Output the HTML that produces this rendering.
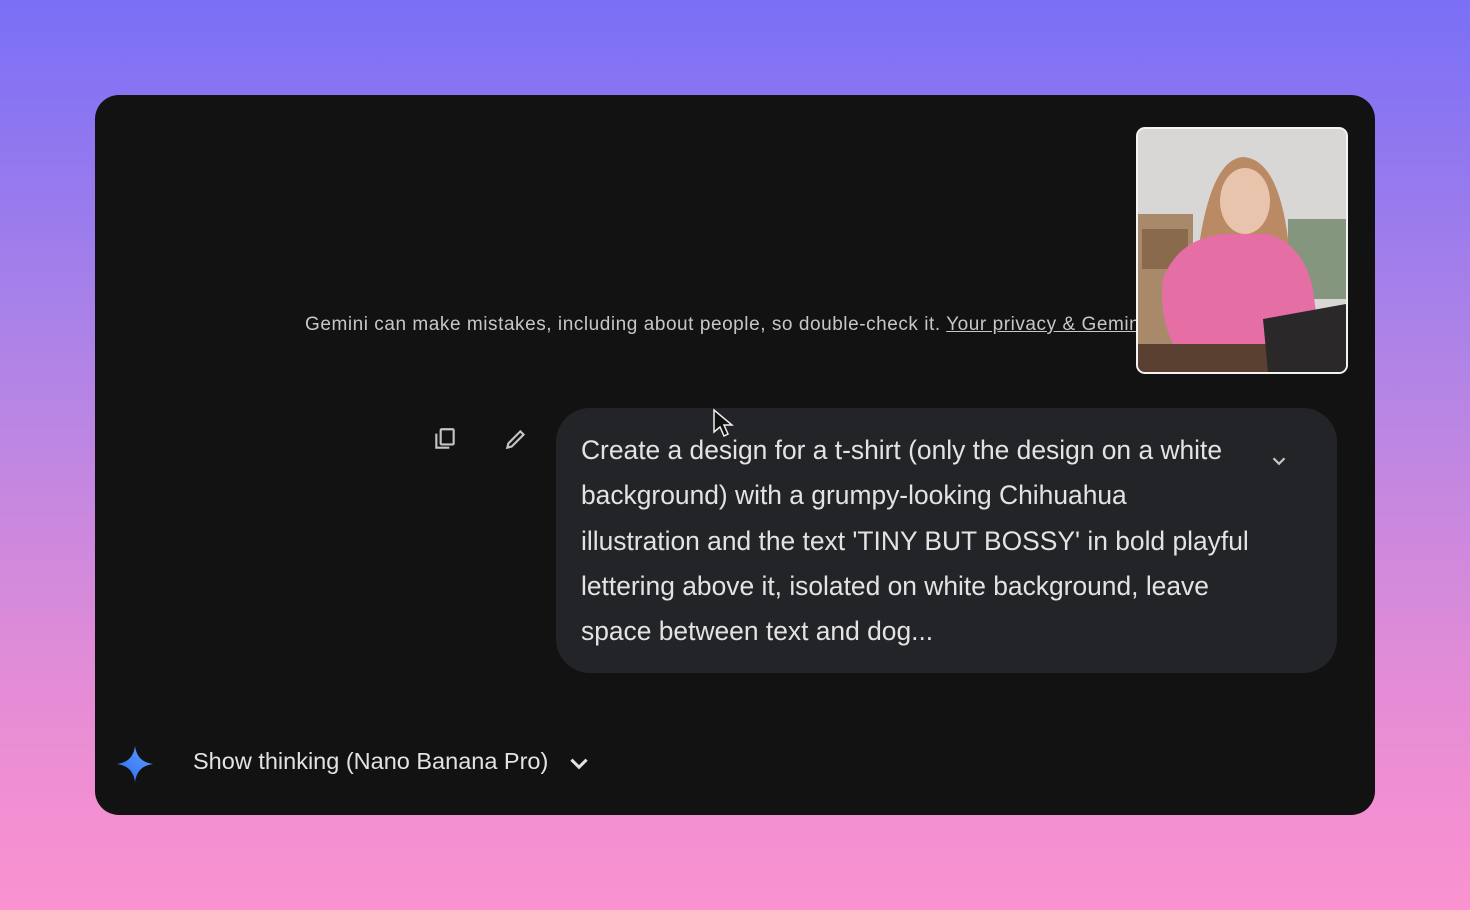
<!DOCTYPE html>
<html><head><style>
html,body{margin:0;padding:0;}
body{width:1470px;height:910px;overflow:hidden;background:linear-gradient(180deg,#7a6ff6 0%,#b184e6 40%,#e48cd6 75%,#fb92cf 100%);font-family:"Liberation Sans",sans-serif;position:relative;}
.card{position:absolute;left:95px;top:95px;width:1280px;height:720px;background:#121213;border-radius:24px;overflow:hidden;}
.disc{position:absolute;left:210px;top:219px;font-size:19px;letter-spacing:0.55px;color:#c7c7c7;white-space:nowrap;}
.disc u{color:#c7c7c7;}
.bubble{position:absolute;left:461px;top:313px;width:781px;height:265px;background:#232427;border-radius:34px;}
.btext{position:absolute;left:25px;top:20px;font-size:26.4px;line-height:45.3px;color:#e3e3e3;white-space:nowrap;}
.show{position:absolute;left:98px;top:653px;font-size:23.5px;color:#e3e3e3;white-space:nowrap;}
.photo{position:absolute;left:1041px;top:32px;width:208px;height:243px;border:2px solid #f3f3f3;border-radius:9px;overflow:hidden;background:#d9d8d6;}
</style></head><body>
<div class="card">
<div class="disc">Gemini can make mistakes, including about people, so double-check it. <u>Your privacy &amp; Gemini Apps</u></div>
<div class="photo">
<svg width="208" height="243" viewBox="0 0 208 243">
<rect width="208" height="243" fill="#d8d7d5"/>
<rect x="0" y="85" width="55" height="160" fill="#a88a6a"/>
<rect x="4" y="100" width="46" height="40" fill="#8a6a4c"/>
<rect x="150" y="90" width="58" height="80" fill="#4c6b45" opacity=".6"/>
<path d="M62 110 Q75 30 105 28 Q140 30 150 110 L160 175 L55 180Z" fill="#b98a64"/>
<ellipse cx="107" cy="72" rx="25" ry="33" fill="#e8c4ad"/>
<path d="M25 150 Q40 110 85 105 L130 105 Q165 115 175 160 L180 200 L130 215 L40 225 Q20 190 25 150Z" fill="#e56fa4"/>
<rect x="0" y="215" width="208" height="30" fill="#5a4030"/>
<path d="M125 190 L208 175 L208 243 L130 243Z" fill="#2a2828"/>
</svg>
</div>
<svg style="position:absolute;left:337px;top:331px" width="26" height="26" viewBox="0 0 24 24" fill="none" stroke="#c4c4c4" stroke-width="2"><rect x="8" y="3" width="12" height="14" rx="1"/><path d="M4 7v13h12"/></svg>
<svg style="position:absolute;left:408px;top:331px" width="26" height="26" viewBox="0 0 24 24" fill="none" stroke="#c4c4c4" stroke-width="2"><path d="M4 20l1-4L16 5l3 3L8 19z"/></svg>
<div class="bubble">
<div class="btext">Create a design for a t-shirt (only the design on a white<br>background) with a grumpy-looking Chihuahua<br>illustration and the text 'TINY BUT BOSSY' in bold playful<br>lettering above it, isolated on white background, leave<br>space between text and dog...</div>
<svg style="position:absolute;left:712px;top:42px" width="22" height="22" viewBox="0 0 24 24" fill="none" stroke="#c4c4c4" stroke-width="2.5"><path d="M6 9l6 6 6-6"/></svg>
</div>
<svg style="position:absolute;left:20px;top:649px" width="40" height="40" viewBox="0 0 40 40"><defs><linearGradient id="g" x1="0" y1="1" x2="1" y2="0"><stop offset="0" stop-color="#2f6cf0"/><stop offset="1" stop-color="#5aa0ff"/></linearGradient></defs><path d="M20 2 Q22 18 38 20 Q22 22 20 38 Q18 22 2 20 Q18 18 20 2Z" fill="url(#g)"/></svg>
<div class="show">Show thinking (Nano Banana Pro)</div>
<svg style="position:absolute;left:471px;top:656px" width="26" height="26" viewBox="0 0 24 24" fill="none" stroke="#e3e3e3" stroke-width="2.8"><path d="M5 8l7 7 7-7"/></svg>
<svg style="position:absolute;left:617px;top:313px" width="22" height="32" viewBox="0 0 22 32"><path d="M2 2v22l6-5 4 9 4-2-4-9h8z" fill="#111" stroke="#eee" stroke-width="1.5"/></svg>
</div>
</body></html>
